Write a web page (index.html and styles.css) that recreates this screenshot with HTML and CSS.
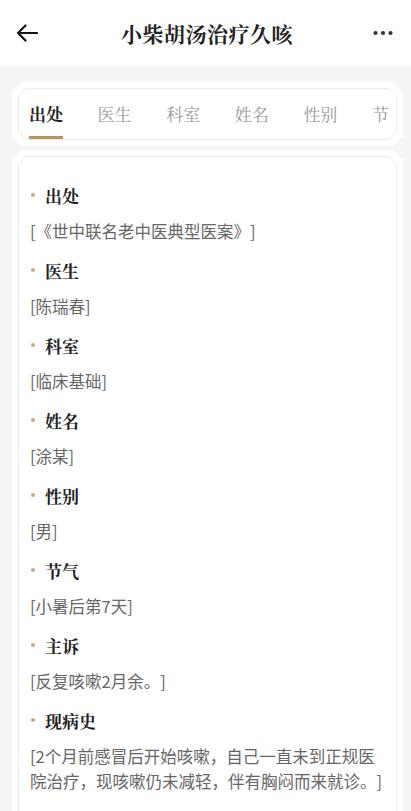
FILE: index.html
```html
<!DOCTYPE html>
<html lang="zh-CN">
<head>
    <meta charset="utf-8">
    <meta name="viewport" content="width=device-width, initial-scale=1.0">
    <title>小柴胡汤治疗久咳</title>
    <link rel="stylesheet" href="styles.css">
</head>
<body>
<div class="page">
    <div class="header">
        <a class="back">
            <svg width="22" height="18" viewBox="0 0 22 18"><path d="M21 9H2M9.5 1.5L2 9l7.5 7.5" fill="none" stroke="#111" stroke-width="2.2" stroke-linecap="round" stroke-linejoin="round"/></svg>
        </a>
        <div class="title">小柴胡汤治疗久咳</div>
        <a class="more">
            <svg width="20" height="6" viewBox="0 0 20 6"><circle cx="2.5" cy="3" r="2.1" fill="#333"/><circle cx="10" cy="3" r="2.1" fill="#333"/><circle cx="17.5" cy="3" r="2.1" fill="#333"/></svg>
        </a>
    </div>
    <div class="content">
        <div class="frame">
            <div class="frame-line">
                <div class="frame-body">
                    <div class="tabs">
                        <span class="tab active">出处</span>
                        <span class="tab">医生</span>
                        <span class="tab">科室</span>
                        <span class="tab">姓名</span>
                        <span class="tab">性别</span>
                        <span class="tab">节气</span>
                        <span class="tab">主诉</span>
                        <span class="tab">现病史</span>
                    </div>
                </div>
            </div>
        </div>
        <div class="frame frame-long">
            <div class="frame-line">
                <div class="frame-body detail">
                    <div class="item">
                        <div class="item-title">出处</div>
                        <div class="item-text">[《世中联名老中医典型医案》]</div>
                    </div>
                    <div class="item">
                        <div class="item-title">医生</div>
                        <div class="item-text">[陈瑞春]</div>
                    </div>
                    <div class="item">
                        <div class="item-title">科室</div>
                        <div class="item-text">[临床基础]</div>
                    </div>
                    <div class="item">
                        <div class="item-title">姓名</div>
                        <div class="item-text">[涂某]</div>
                    </div>
                    <div class="item">
                        <div class="item-title">性别</div>
                        <div class="item-text">[男]</div>
                    </div>
                    <div class="item">
                        <div class="item-title">节气</div>
                        <div class="item-text">[小暑后第7天]</div>
                    </div>
                    <div class="item">
                        <div class="item-title">主诉</div>
                        <div class="item-text">[反复咳嗽2月余。]</div>
                    </div>
                    <div class="item">
                        <div class="item-title">现病史</div>
                        <div class="item-text">[2个月前感冒后开始咳嗽，自己一直未到正规医院治疗，现咳嗽仍未减轻，伴有胸闷而来就诊。]</div>
                    </div>
                </div>
            </div>
        </div>
    </div>
</div>
</body>
</html>
```

FILE: styles.css
```css
* {
    margin: 0;
    padding: 0;
    box-sizing: border-box;
}
html,body {
    height: 100%;
}
body {
    font-family: "Noto Sans CJK SC", "Noto Sans", sans-serif;
    background-color: #f5f5f5;
    overflow: hidden;
    text-spacing-trim: space-all;
}
.page {
    height: 100%;
}
.header {
    height: 66px;
    background-color: #fff;
    display: flex;
    align-items: center;
    justify-content: space-between;
    padding: 0 18px 0 16px;
}
.header .back,
.header .more {
    width: 22px;
    display: flex;
    align-items: center;
}
.header .more {
    justify-content: flex-end;
}
.header .title {
    font-family: "Noto Serif CJK SC", "Noto Sans CJK SC", serif;
    font-size: 21px;
    font-weight: bold;
    color: #222;
    letter-spacing: 0.5px;
    margin-left: 5px;
}
.content {
    padding: 16px 8px 0 12px;
    display: flex;
    flex-direction: column;
    gap: 4px;
}
.frame {
    background-color: #fff;
    padding: 6px;
    clip-path: polygon(10px 0, calc(100% - 10px) 0, 100% 10px, 100% calc(100% - 10px), calc(100% - 10px) 100%, 10px 100%, 0 calc(100% - 10px), 0 10px);
}
.frame-line {
    background-color: #ebebeb;
    padding: 1px;
    clip-path: polygon(8px 0, calc(100% - 8px) 0, 100% 8px, 100% calc(100% - 8px), calc(100% - 8px) 100%, 8px 100%, 0 calc(100% - 8px), 0 8px);
}
.frame-body {
    background-color: #fff;
    clip-path: polygon(7px 0, calc(100% - 7px) 0, 100% 7px, 100% calc(100% - 7px), calc(100% - 7px) 100%, 7px 100%, 0 calc(100% - 7px), 0 7px);
}
.tabs {
    display: flex;
    gap: 34.6px;
    margin: 0 8px 0 10px;
    height: 50px;
    overflow: hidden;
    white-space: nowrap;
}
.tab {
    font-family: "Noto Serif CJK SC", "Noto Sans CJK SC", serif;
    font-size: 17px;
    line-height: 22px;
    color: #999;
    padding: 14px 0 9px;
    border-bottom: 3px solid transparent;
    flex-shrink: 0;
}
.tab.active {
    color: #222;
    font-weight: bold;
    border-bottom-color: #b9955b;
}
.frame-long {
    min-height: 700px;
}
.detail {
    padding: 27px 9px 40px 11px;
    min-height: 680px;
}
.item {
    margin-bottom: 15px;
}
.item-title {
    display: flex;
    align-items: center;
    gap: 10px;
    font-family: "Noto Serif CJK SC", "Noto Sans CJK SC", serif;
    font-size: 17px;
    font-weight: bold;
    line-height: 24px;
    color: #222;
    margin-bottom: 11px;
}
.item-title:before {
    content: "";
    width: 4px;
    height: 4px;
    border-radius: 50%;
    margin: 0 0 3px 1px;
    background-color: #c9a97a;
}
.item-text {
    font-size: 16.5px;
    line-height: 25px;
    color: #666;
}
```
